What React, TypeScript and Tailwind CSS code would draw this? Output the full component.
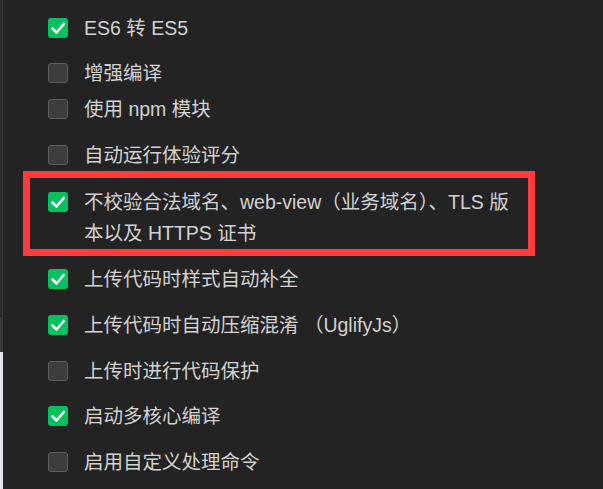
import React from 'react'

type Option = {
    label: React.ReactNode
    checked: boolean
    gap: string
}

const Checkbox = ({ checked }: { checked: boolean }) => {
    if (checked) {
        return (
            <div className="mt-[5px] h-[20px] w-[20px] shrink-0 rounded-[3px] bg-[#07c160] flex items-center justify-center">
                <svg width="20" height="20" viewBox="0 0 20 20" fill="none">
                    <polyline points="4.5,10.5 8.5,14.5 15.8,6" stroke="#ffffff" strokeWidth="2.6" strokeLinecap="round" strokeLinejoin="round" />
                </svg>
            </div>
        )
    }
    return <div className="mt-[5px] h-[20px] w-[20px] shrink-0 rounded-[3px] border border-[#5e5e5e] bg-[#3d3d3d]" />
}

const Row = ({ option }: { option: Option }) => (
    <div className={`flex items-start gap-[16px] ${option.gap}`}>
        <Checkbox checked={option.checked} />
        <div className="leading-[31px]">{option.label}</div>
    </div>
)

const App = () => {
    const top: Option[] = [
        { label: 'ES6 转 ES5', checked: true, gap: 'mt-[13px]' },
        { label: '增强编译', checked: false, gap: 'mt-[14px]' },
        { label: '使用 npm 模块', checked: false, gap: 'mt-[5px]' },
        { label: '自动运行体验评分', checked: false, gap: 'mt-[15px]' },
    ]

    const bottom: Option[] = [
        { label: '上传代码时样式自动补全', checked: true, gap: 'mt-[8px]' },
        { label: '上传代码时自动压缩混淆 （UglifyJs）', checked: true, gap: 'mt-[15px]' },
        { label: '上传时进行代码保护', checked: false, gap: 'mt-[15px]' },
        { label: '启动多核心编译', checked: true, gap: 'mt-[14px]' },
        { label: '启用自定义处理命令', checked: false, gap: 'mt-[15px]' },
    ]

    return (
        <div
            className="flex h-[489px] w-[603px] overflow-hidden bg-[#232323] text-[19.5px] text-[#d2d2d2]"
            style={{ fontFamily: '"Liberation Sans", "Noto Sans CJK SC", sans-serif' }}
        >
            {/* left edge of the neighbouring pane */}
            <div className="flex w-[3px] shrink-0 flex-col">
                <div className="h-[317px] border-r border-[#3a3a3a] bg-[#2a2a2a]" />
                <div className="h-[35px] bg-[#3b3b3b]" />
                <div className="flex-1 bg-[#e2e6ec]" />
            </div>

            <div className="flex flex-1 flex-col pl-[45px]">
                {top.map((o, i) => (
                    <Row key={i} option={o} />
                ))}

                <div className="-ml-[25px] w-[512px] border-[7px] border-[#ff3b3b] pl-[18px] pt-[9px]">
                    <div className="flex items-start gap-[16px]">
                        <Checkbox checked={true} />
                        <div className="leading-[31px]">
                            不校验合法域名、web-view（业务域名）、TLS 版
                            <br />
                            本以及 HTTPS 证书
                        </div>
                    </div>
                </div>

                {bottom.map((o, i) => (
                    <Row key={i} option={o} />
                ))}
            </div>
        </div>
    )
}

export default App
